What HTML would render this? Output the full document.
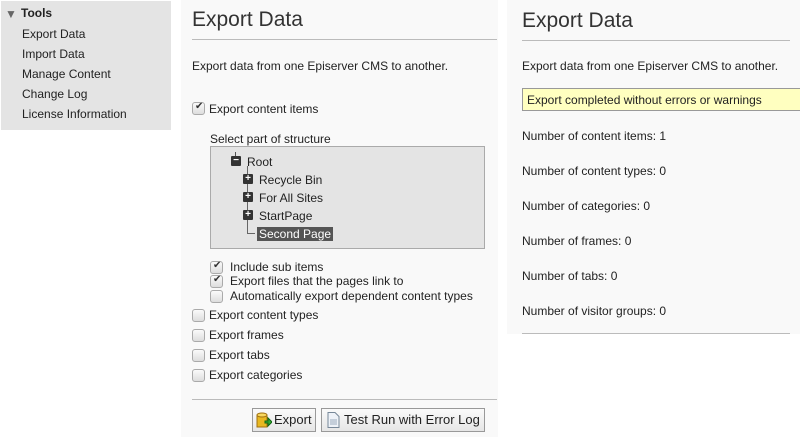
<!DOCTYPE html>
<html><head><meta charset="utf-8"><style>
*{margin:0;padding:0;box-sizing:border-box}
body{width:800px;height:444px;background:#fff;font-family:"Liberation Sans",Arial,sans-serif;font-size:12px;color:#222;position:relative;overflow:hidden}
.a{position:absolute;white-space:nowrap}
.side{position:absolute;left:1px;top:1px;width:170px;height:129px;background:#e4e4e4}
.pan{position:absolute;background:#f9f9f9}
h1{position:absolute;font-weight:normal;font-size:21px;color:#333;white-space:nowrap}
.hr{position:absolute;height:1px;background:#bbb}
.cb{position:absolute;width:13px;height:13px;border:1px solid #aaa;border-radius:3px;background:linear-gradient(#fafafa,#ddd)}
.cb.c::after{content:"✔";position:absolute;left:2px;top:-2px;font-size:10px;color:#333}
.ti{position:absolute;width:10px;height:10px;background:#333;border-radius:1px;color:#fff;font-size:10px;line-height:9px;text-align:center;font-weight:bold}
.btn{position:absolute;height:24px;border:1px solid #999;background:linear-gradient(#fafafa,#e6e6e6);font-size:13px;line-height:22px}
</style></head><body>
<div class="side"></div>
<div class="a" style="left:5px;top:7px;font-size:12px;color:#666">▼</div>
<div class="a" style="left:21px;top:6px;font-weight:bold">Tools</div>
<div class="a" style="left:22px;top:27px">Export Data</div>
<div class="a" style="left:22px;top:47px">Import Data</div>
<div class="a" style="left:22px;top:67px">Manage Content</div>
<div class="a" style="left:22px;top:87px">Change Log</div>
<div class="a" style="left:22px;top:107px">License Information</div>

<div class="pan" style="left:181px;top:0;width:317px;height:437px"></div>
<h1 style="left:192px;top:8px">Export Data</h1>
<div class="hr" style="left:192px;top:39px;width:305px"></div>
<div class="a" style="left:192px;top:59px">Export data from one Episerver CMS to another.</div>
<div class="cb c" style="left:192px;top:102px"></div>
<div class="a" style="left:209px;top:102px">Export content items</div>
<div class="a" style="left:210px;top:132px">Select part of structure</div>
<div class="a" style="left:210px;top:146px;width:275px;height:103px;background:#e4e4e4;border:1px solid #aaa"></div>
<div class="a" style="left:235px;top:152px;width:1px;height:4px;background:#555"></div>
<div class="ti" style="left:231px;top:156px">−</div>
<div class="a" style="left:247px;top:155px">Root</div>
<div class="a" style="left:247px;top:166px;width:1px;height:67px;background:#666"></div>
<div class="a" style="left:247px;top:233px;width:8px;height:1px;background:#666"></div>
<div class="ti" style="left:243px;top:174px">+</div><div class="a" style="left:259px;top:173px">Recycle Bin</div>
<div class="ti" style="left:243px;top:192px">+</div><div class="a" style="left:259px;top:191px">For All Sites</div>
<div class="ti" style="left:243px;top:210px">+</div><div class="a" style="left:259px;top:209px">StartPage</div>
<div class="a" style="left:257px;top:227px;height:14px;background:#555;color:#fff;padding:0 2px;line-height:14px">Second Page</div>
<div class="cb c" style="left:210px;top:261px"></div><div class="a" style="left:230px;top:260px">Include sub items</div>
<div class="cb c" style="left:210px;top:275px"></div><div class="a" style="left:230px;top:274px">Export files that the pages link to</div>
<div class="cb" style="left:210px;top:290px"></div><div class="a" style="left:230px;top:289px">Automatically export dependent content types</div>
<div class="cb" style="left:192px;top:309px"></div><div class="a" style="left:209px;top:308px">Export content types</div>
<div class="cb" style="left:192px;top:329px"></div><div class="a" style="left:209px;top:328px">Export frames</div>
<div class="cb" style="left:192px;top:349px"></div><div class="a" style="left:209px;top:348px">Export tabs</div>
<div class="cb" style="left:192px;top:369px"></div><div class="a" style="left:209px;top:368px">Export categories</div>
<div class="hr" style="left:192px;top:399px;width:305px"></div>
<div class="btn" style="left:252px;top:408px;width:64px">
<svg style="position:absolute;left:3px;top:3px" width="16" height="17"><rect x="1" y="3" width="10" height="12" fill="#e8b820" stroke="#a07010"/><ellipse cx="6" cy="3" rx="5" ry="2" fill="#f8d860" stroke="#a07010"/><path d="M9 9h3v-3l4 4-4 4v-3h-3z" fill="#3a3" stroke="#161"/></svg>
<span style="position:absolute;left:21px">Export</span></div>
<div class="btn" style="left:321px;top:408px;width:164px">
<svg style="position:absolute;left:5px;top:3px" width="13" height="16"><path d="M1 .5h7l4 4v11H1z" fill="#eef2f8" stroke="#789"/><path d="M3 8h7M3 10h7M3 12h7" stroke="#9ab"/></svg>
<span style="position:absolute;left:22px">Test Run with Error Log</span></div>

<div class="pan" style="left:507px;top:0;width:293px;height:334px"></div>
<h1 style="left:522px;top:9px">Export Data</h1>
<div class="hr" style="left:522px;top:40px;width:268px"></div>
<div class="a" style="left:522px;top:59px">Export data from one Episerver CMS to another.</div>
<div class="a" style="left:522px;top:88px;width:278px;height:23px;background:#ffffc0;border:1px solid #999;border-right:none;padding:4px 0 0 4px">Export completed without errors or warnings</div>
<div class="a" style="left:522px;top:129px">Number of content items: 1</div>
<div class="a" style="left:522px;top:164px">Number of content types: 0</div>
<div class="a" style="left:522px;top:199px">Number of categories: 0</div>
<div class="a" style="left:522px;top:234px">Number of frames: 0</div>
<div class="a" style="left:522px;top:269px">Number of tabs: 0</div>
<div class="a" style="left:522px;top:304px">Number of visitor groups: 0</div>
<div class="hr" style="left:522px;top:333px;width:268px"></div>
</body></html>
